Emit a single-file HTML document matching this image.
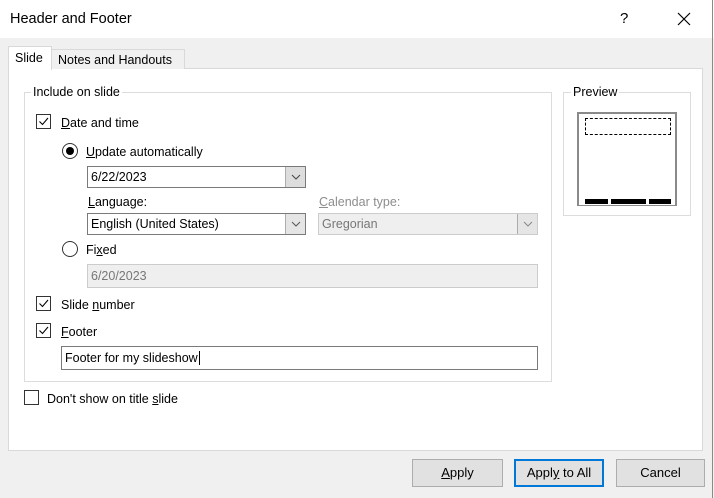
<!DOCTYPE html>
<html><head><style>
*{box-sizing:border-box;margin:0;padding:0}
body{width:714px;height:498px;background:#f0f0f0;font-family:"Liberation Sans",sans-serif;font-size:12.5px;color:#000;position:relative;overflow:hidden}
.a{position:absolute}
.t{position:absolute;white-space:nowrap;line-height:16px}
.cb{position:absolute;width:15px;height:15px;border:1px solid #333;background:#fff}
.cb svg{position:absolute;left:1px;top:1px}
.dd{position:absolute;border:1px solid #7a7a7a;background:#fff;height:22px;padding:3px 0 0 3px;line-height:15px}
.dd .ar{position:absolute;right:0;top:0;width:20px;height:20px;background:#e5e5e5;border-left:1px solid #adadad}
.dis{background:#efefef;border-color:#ccc;color:#777}
.btn{position:absolute;top:459px;height:28px;background:#e1e1e1;border:1px solid #adadad;text-align:center;line-height:26px;font-size:13px}
u{text-decoration:underline}
</style></head><body>
<div class="a" style="left:0;top:0;width:714px;height:38px;background:#fff"></div>
<div class="a" style="left:712px;top:0;width:1px;height:498px;background:#8a8a8a"></div>
<div class="t" style="left:10px;top:11px;font-size:14.5px">Header and Footer</div>
<div class="t" style="left:620px;top:11px;font-size:15px">?</div>
<svg class="a" style="left:677px;top:12px" width="14" height="14"><path d="M1 1L13 13M13 1L1 13" stroke="#000" stroke-width="1.2"/></svg>
<div class="a" style="left:8px;top:68px;width:695px;height:383px;background:#fff;border:1px solid #d9d9d9"></div>
<div class="a" style="left:51px;top:49px;width:134px;height:20px;background:#f0f0f0;border:1px solid #d9d9d9;border-bottom:none"></div>
<div class="t" style="left:58px;top:52px">Notes and Handouts</div>
<div class="a" style="left:8px;top:46px;width:44px;height:24px;background:#fff;border:1px solid #d9d9d9;border-bottom:none"></div>
<div class="t" style="left:15px;top:50px">Slide</div>
<div class="a" style="left:24px;top:92px;width:528px;height:290px;border:1px solid #dcdcdc"></div>
<div class="t" style="left:31px;top:84px;background:#fff;padding:0 2px">Include on slide</div>
<div class="a" style="left:563px;top:92px;width:128px;height:124px;border:1px solid #dcdcdc"></div>
<div class="t" style="left:571px;top:84px;background:#fff;padding:0 2px">Preview</div>
<div class="a" style="left:577px;top:112px;width:100px;height:94px;border:2px solid #8a8a8a;border-bottom:1px solid #8a8a8a;background:#fff"></div>
<div class="a" style="left:585px;top:118px;width:86px;height:17px;border:1px dashed #000"></div>
<div class="a" style="left:585px;top:199px;width:23px;height:5px;background:#000"></div>
<div class="a" style="left:611px;top:199px;width:35px;height:5px;background:#000"></div>
<div class="a" style="left:649px;top:199px;width:22px;height:5px;background:#000"></div>
<div class="cb" style="left:36px;top:114px"><svg width="11" height="11"><path d="M1.5 5.5L4.5 8.5L10 2" stroke="#000" fill="none" stroke-width="1.1"/></svg></div>
<div class="t" style="left:61px;top:115px"><u>D</u>ate and time</div>
<div class="a" style="left:62px;top:143px;width:16px;height:16px;border:1px solid #333;border-radius:50%;background:#fff"></div>
<div class="a" style="left:66px;top:147px;width:8px;height:8px;border-radius:50%;background:#000"></div>
<div class="t" style="left:86px;top:144px"><u>U</u>pdate automatically</div>
<div class="dd" style="left:87px;top:166px;width:219px">6/22/2023<div class="ar" style="background:#ddd"><svg width="20" height="20"><path d="M6 8L10 12L14 8" stroke="#444" fill="none"/></svg></div></div>
<div class="t" style="left:88px;top:194px"><u>L</u>anguage:</div>
<div class="t" style="left:319px;top:194px;color:#8d8d8d"><u>C</u>alendar type:</div>
<div class="dd" style="left:87px;top:213px;width:219px">English (United States)<div class="ar"><svg width="20" height="20"><path d="M6 8L10 12L14 8" stroke="#555" fill="none"/></svg></div></div>
<div class="dd dis" style="left:318px;top:213px;width:220px">Gregorian<div class="ar"><svg width="20" height="20"><path d="M6 8L10 12L14 8" stroke="#888" fill="none"/></svg></div></div>
<div class="a" style="left:62px;top:241px;width:16px;height:16px;border:1px solid #333;border-radius:50%;background:#fff"></div>
<div class="t" style="left:86px;top:242px">Fi<u>x</u>ed</div>
<div class="dd dis" style="left:87px;top:264px;width:451px;height:24px;padding-top:4px">6/20/2023</div>
<div class="cb" style="left:36px;top:296px"><svg width="11" height="11"><path d="M1.5 5.5L4.5 8.5L10 2" stroke="#000" fill="none" stroke-width="1.1"/></svg></div>
<div class="t" style="left:61px;top:297px">Slide <u>n</u>umber</div>
<div class="cb" style="left:36px;top:323px"><svg width="11" height="11"><path d="M1.5 5.5L4.5 8.5L10 2" stroke="#000" fill="none" stroke-width="1.1"/></svg></div>
<div class="t" style="left:61px;top:324px"><u>F</u>ooter</div>
<div class="dd" style="left:61px;top:346px;width:477px;height:24px;padding-top:4px">Footer for my slideshow<span style="border-left:1px solid #000;margin-left:1px"></span></div>
<div class="cb" style="left:24px;top:390px"></div>
<div class="t" style="left:47px;top:391px">Don't show on title <u>s</u>lide</div>
<div class="btn" style="left:412px;width:91px"><u>A</u>pply</div>
<div class="btn" style="left:514px;width:90px;border:2px solid #0078d7;line-height:24px">Appl<u>y</u> to All</div>
<div class="btn" style="left:616px;width:89px">Cancel</div>
</body></html>
